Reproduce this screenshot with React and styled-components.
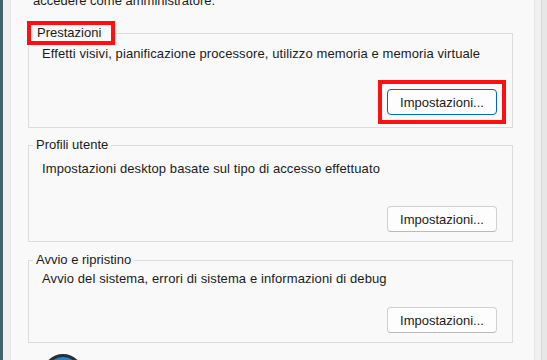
import React from 'react';
import styled, { createGlobalStyle } from 'styled-components';

const GlobalStyle = createGlobalStyle`
  html, body {
    margin: 0;
    padding: 0;
    background: #46626b;
  }
  body {
    font-family: "Liberation Sans", Arial, sans-serif;
    font-size: 13px;
    color: #1b1b1b;
  }
`

const StScreen = styled.div`
  display: flex;
  width: 547px;
  height: 360px;
  overflow: hidden;
`

const StDesktop = styled.div`
  width: 3px;
  flex: none;
  background-color: #46626b;
`

const StDialog = styled.div`
  flex: 1;
  display: flex;
  background-color: #f0f0f0;
  padding: 0 6px 0 7px;
  border-right: 1px solid #d6d6d6;
`

const StFrameEdge = styled.div`
  width: 5px;
  flex: none;
  background-color: #e7e7e7;
`

const StTabPage = styled.div`
  flex: 1;
  display: flex;
  flex-direction: column;
  background-color: #f9f9f9;
  border-left: 1px solid #e6e6e6;
  border-right: 1px solid #e6e6e6;
  padding: 0 21px 0 17px;
`

const StNote = styled.div`
  height: 16px;
  line-height: 16px;
  margin-top: -7px;
  padding-left: 5px;
  white-space: nowrap;
`

const StGroup = styled.fieldset`
  margin: ${(p) => p.$top}px 0 0 0;
  padding: 0 15px ${(p) => p.$bottom}px 4px;
  border: 1px solid #dcdcdc;
  border-radius: 0;
  display: flex;
  flex-direction: column;
  min-width: 0;
`

const StLegend = styled.legend`
  height: 16px;
  line-height: 16px;
  padding: ${(p) => (p.$highlight ? '0 10px 0 6px' : '0 3px')};
  margin-left: ${(p) => (p.$highlight ? -2 : 0)}px;
  outline: ${(p) => (p.$highlight ? '4px solid #ff1010' : 'none')};
  background-color: #f9f9f9;
`

const StDesc = styled.div`
  height: 16px;
  line-height: 16px;
  margin-top: ${(p) => p.$gap}px;
  padding-left: 9px;
  white-space: nowrap;
  letter-spacing: 0.1px;
`

const StBtnRow = styled.div`
  display: flex;
  justify-content: flex-end;
  margin-top: ${(p) => p.$gap}px;
`

/* red annotation box drawn round a control, square corners */
const StMark = styled.span`
  display: inline-flex;
  outline: 4px solid #ff1010;
  outline-offset: 5px;
`

const StBtn = styled.button`
  width: 110px;
  height: 26px;
  padding: 0;
  font-family: inherit;
  font-size: 13px;
  color: #1b1b1b;
  background-color: #fdfdfd;
  border: 1px solid ${(p) => (p.$focused ? '#0067c0' : '#d0d0d0')};
  border-bottom-color: ${(p) => (p.$focused ? '#0067c0' : '#bababa')};
  border-radius: 4px;
`

const StFooter = styled.div`
  display: flex;
  align-items: flex-start;
  justify-content: space-between;
  margin-top: 11px;
  padding: 0 2px 0 15px;
`

const StAvatar = styled.div`
  width: 34px;
  height: 34px;
  border-radius: 50%;
  border: 3px solid #2a2f33;
  background-color: #1f86d4;
`

const StWideBtn = styled.div`
  width: 165px;
  height: 26px;
  margin-top: 6px;
  background-color: #fdfdfd;
  border: 1px solid #d0d0d0;
  border-radius: 4px;
`

const groups = [
  {
    title: 'Prestazioni',
    desc: 'Effetti visivi, pianificazione processore, utilizzo memoria e memoria virtuale',
    top: 16, descGap: 5, btnGap: 27, bottom: 12, highlight: true,
  },
  {
    title: 'Profili utente',
    desc: 'Impostazioni desktop basate sul tipo di accesso effettuato',
    top: 9, descGap: 8, btnGap: 29, bottom: 9,
  },
  {
    title: 'Avvio e ripristino',
    desc: 'Avvio del sistema, errori di sistema e informazioni di debug',
    top: 10, descGap: 3, btnGap: 20, bottom: 9,
  },
]

function App() {
  return (
    <StScreen>
      <GlobalStyle />
      <StDesktop />
      <StDialog>
        <StTabPage>
          <StNote>accedere come amministratore.</StNote>
          {groups.map((g) => {
            const btn = <StBtn $focused={g.highlight}>Impostazioni...</StBtn>
            return (
              <StGroup key={g.title} $top={g.top} $bottom={g.bottom}>
                <StLegend $highlight={g.highlight}>{g.title}</StLegend>
                <StDesc $gap={g.descGap}>{g.desc}</StDesc>
                <StBtnRow $gap={g.btnGap}>
                  {g.highlight ? <StMark>{btn}</StMark> : btn}
                </StBtnRow>
              </StGroup>
            )
          })}
          <StFooter>
            <StAvatar />
            <StWideBtn />
          </StFooter>
        </StTabPage>
      </StDialog>
      <StFrameEdge />
    </StScreen>
  );
}

export default App;
